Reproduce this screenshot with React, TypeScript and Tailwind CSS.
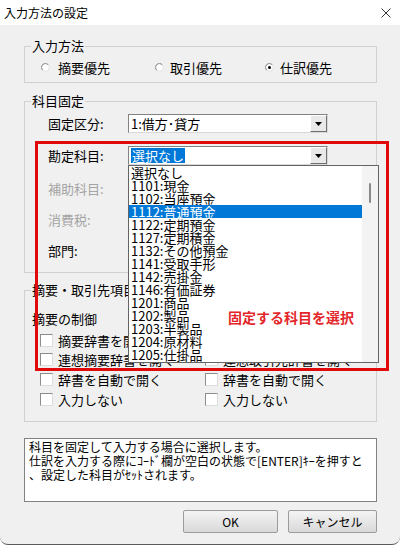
import React from "react";

const Radio = ({ checked }: { checked?: boolean }) => (
  <svg width="9" height="9" viewBox="0 0 9 9" className="shrink-0">
    <circle cx="4.5" cy="4.5" r="3.8" fill="#ffffff" stroke="#e2e2e2" strokeWidth="1" />
    <path d="M1.6 7.2 A3.8 3.8 0 0 1 7.2 1.6" fill="none" stroke="#8a8a8a" strokeWidth="1" />
    {checked && <circle cx="4.5" cy="4.5" r="1.5" fill="#000000" />}
  </svg>
);

const Check = () => (
  <div className="w-[13px] h-[13px] shrink-0 bg-white border border-t-[#8c8c8c] border-l-[#8c8c8c] border-r-[#dcdcdc] border-b-[#dcdcdc]" />
);

const ArrowBtn = () => (
  <div className="w-[17px] shrink-0 flex items-center justify-center bg-[#e9e9e9] border border-t-[#ffffff] border-l-[#ffffff] border-r-[#707070] border-b-[#707070]">
    <svg width="7" height="4" viewBox="0 0 7 4">
      <path d="M0 0H7L3.5 4Z" fill="#000000" />
    </svg>
  </div>
);

const Combo = ({ children }: { children: React.ReactNode }) => (
  <div className="w-[200px] h-[19px] flex bg-white border border-t-[#828282] border-l-[#828282] border-r-[#d8d8d8] border-b-[#d8d8d8]">
    <div className="flex-1 flex items-center pl-[2px] whitespace-nowrap">{children}</div>
    <ArrowBtn />
  </div>
);

const items = [
  "選択なし",
  "1101:現金",
  "1102:当座預金",
  "1112:普通預金",
  "1122:定期預金",
  "1127:定期積金",
  "1132:その他預金",
  "1141:受取手形",
  "1142:売掛金",
  "1146:有価証券",
  "1201:商品",
  "1202:製品",
  "1203:半製品",
  "1204:原材料",
  "1205:仕掛品",
];

export default function App() {
  return (
    <div className="w-[400px] h-[546px] bg-white font-['Noto_Sans_CJK_JP',sans-serif] text-[13px] leading-[15px] text-black">
      <div className="relative h-[545px] bg-[#f0f0f0] border-b border-[#5b5b5b] rounded-b-[8px] flex flex-col overflow-hidden">
        {/* title bar */}
        <div className="h-[25px] shrink-0 bg-white flex items-center justify-between pl-[4px] pr-[9px]">
          <span className="text-[12px] leading-[14px]">入力方法の設定</span>
          <svg width="10" height="10" viewBox="0 0 10 10">
            <path d="M0.5 0.5L9.5 9.5M9.5 0.5L0.5 9.5" stroke="#333333" strokeWidth="1" />
          </svg>
        </div>

        <div className="pl-[24px] pr-[23px] flex flex-col">
          {/* 入力方法 */}
          <fieldset className="mt-[13px] h-[45px] border border-[#d0d0d0] px-[6px]">
            <legend className="px-px leading-[16px]">入力方法</legend>
            <div className="mt-[4px] h-[18px] flex items-center pl-[10px]">
              <div className="w-[114px] flex items-center gap-[8px]">
                <Radio />
                <span>摘要優先</span>
              </div>
              <div className="w-[110px] flex items-center gap-[6px]">
                <Radio />
                <span>取引優先</span>
              </div>
              <div className="flex items-center gap-[6px]">
                <Radio checked />
                <span>仕訳優先</span>
              </div>
            </div>
          </fieldset>

          {/* 科目固定 */}
          <fieldset className="mt-[10px] h-[180px] border border-[#d0d0d0] px-[6px]">
            <legend className="px-px leading-[16px]">科目固定</legend>
            <div className="mt-[5px] h-[19px] flex items-center pl-[17px]">
              <span className="w-[80px]">固定区分:</span>
              <Combo>1:借方･貸方</Combo>
            </div>
            <div className="mt-[13px] h-[19px] flex items-center pl-[17px]">
              <span className="w-[80px]">勘定科目:</span>
              <div className="relative">
                <Combo>
                  <span className="bg-[#0078d7] text-white px-px">選択なし</span>
                </Combo>
                <div className="absolute z-10 left-0 top-[19px] w-[251px] h-[198px] bg-white border border-[#646464] flex">
                  <div className="flex-1 flex flex-col">
                    {items.map((it, i) => (
                      <div
                        key={it}
                        className={
                          i === 3
                            ? "h-[13px] leading-[13px] pl-[2px] whitespace-nowrap bg-[#0078d7] text-white"
                            : "h-[13px] leading-[13px] pl-[2px] whitespace-nowrap"
                        }
                      >
                        {it}
                      </div>
                    ))}
                  </div>
                  <div className="w-[16px] bg-[#f3f3f3] flex justify-center pt-[17px]">
                    <div className="w-[2px] h-[20px] rounded-full bg-[#8a8a8a]" />
                  </div>
                </div>
              </div>
            </div>
            <div className="mt-[14px] flex flex-col gap-[12px] pl-[17px]">
              <div className="h-[19px] flex items-center text-[#a4a4a4]">補助科目:</div>
              <div className="h-[19px] flex items-center text-[#a4a4a4]">消費税:</div>
              <div className="h-[19px] flex items-center">部門:</div>
            </div>
          </fieldset>

          {/* 摘要・取引先 */}
          <fieldset className="mt-[9px] h-[140px] border border-[#d0d0d0] px-[6px]">
            <legend className="px-px leading-[16px]">摘要・取引先項目の制御</legend>
            <div className="mt-[12px] h-[16px] flex items-center pl-[1px]">
              <span className="w-[174px]">摘要の制御</span>
              <span>取引先の制御</span>
            </div>
            <div className="mt-[5px] grid grid-cols-[165px_1fr] pl-[9px]">
              {[
                ["摘要辞書を開く", "取引先辞書を開く", "h-[19px]"],
                ["連想摘要辞書を開く", "連想取引先辞書を開く", "h-[19px]"],
                ["辞書を自動で開く", "辞書を自動で開く", "h-[20px]"],
                ["入力しない", "入力しない", "h-[20px]"],
              ].map(([a, b, h]) => (
                <React.Fragment key={a + h}>
                  <div className={`${h} flex items-center gap-[5px]`}>
                    <Check />
                    <span className="whitespace-nowrap">{a}</span>
                  </div>
                  <div className={`${h} flex items-center gap-[5px]`}>
                    <Check />
                    <span className="whitespace-nowrap">{b}</span>
                  </div>
                </React.Fragment>
              ))}
            </div>
          </fieldset>

          {/* description */}
          <div className="mt-[16px] h-[64px] bg-white border border-[#828282] pl-[4px] pt-[1px] text-[12px] leading-[14px] whitespace-nowrap">
            <div>科目を固定して入力する場合に選択します。</div>
            <div>仕訳を入力する際にｺｰﾄﾞ欄が空白の状態で[ENTER]ｷｰを押すと</div>
            <div>、設定した科目がｾｯﾄされます。</div>
          </div>

          {/* buttons */}
          <div className="mt-[8px] flex justify-end gap-[10px]">
            <button className="w-[95px] h-[23px] border border-[#9c9c9c] rounded-[2px] bg-linear-to-b from-[#f4f4f4] to-[#d9d9d9] text-[12px] flex items-center justify-center">
              OK
            </button>
            <button className="w-[89px] h-[23px] border border-[#9c9c9c] rounded-[2px] bg-linear-to-b from-[#f4f4f4] to-[#d9d9d9] text-[12px] flex items-center justify-center">
              キャンセル
            </button>
          </div>
        </div>

        {/* red annotation */}
        <div className="absolute z-20 left-[35px] top-[141px] w-[354px] h-[230px] border-[3px] border-[#e00a0a] pl-[190px] pt-[165px]">
          <span className="text-[14px] leading-[16px] font-bold text-[#e3262a] whitespace-nowrap">固定する科目を選択</span>
        </div>
      </div>
    </div>
  );
}
